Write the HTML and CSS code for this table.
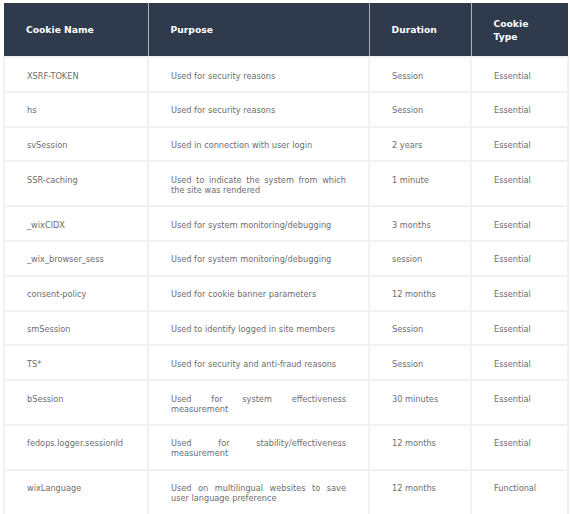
FILE: index.html
```html
<!DOCTYPE html>
<html>
<head>
<meta charset="utf-8">
<link rel="stylesheet" href="styles.css">
</head>
<body>
<div class="wrap">
<table class="cookies">
  <colgroup>
    <col class="c1"><col class="c2"><col class="c3"><col class="c4">
  </colgroup>
  <thead>
    <tr><th>Cookie Name</th><th>Purpose</th><th>Duration</th><th>Cookie<br>Type</th></tr>
  </thead>
  <tbody>
    <tr><td>XSRF-TOKEN</td><td class="p">Used for security reasons</td><td>Session</td><td>Essential</td></tr>
    <tr><td>hs</td><td class="p">Used for security reasons</td><td>Session</td><td>Essential</td></tr>
    <tr><td>svSession</td><td class="p">Used in connection with user login</td><td>2 years</td><td>Essential</td></tr>
    <tr><td>SSR-caching</td><td class="p">Used to indicate the system from which the site was rendered</td><td>1 minute</td><td>Essential</td></tr>
    <tr><td>_wixCIDX</td><td class="p">Used for system monitoring/debugging</td><td>3 months</td><td>Essential</td></tr>
    <tr><td>_wix_browser_sess</td><td class="p">Used for system monitoring/debugging</td><td>session</td><td>Essential</td></tr>
    <tr><td>consent-policy</td><td class="p">Used for cookie banner parameters</td><td>12 months</td><td>Essential</td></tr>
    <tr><td>smSession</td><td class="p">Used to identify logged in site members</td><td>Session</td><td>Essential</td></tr>
    <tr><td>TS*</td><td class="p">Used for security and anti-fraud reasons</td><td>Session</td><td>Essential</td></tr>
    <tr><td>bSession</td><td class="p">Used for system effectiveness measurement</td><td>30 minutes</td><td>Essential</td></tr>
    <tr><td>fedops.logger.sessionId</td><td class="p">Used for stability/effectiveness measurement</td><td>12 months</td><td>Essential</td></tr>
    <tr><td>wixLanguage</td><td class="p">Used on multilingual websites to save user language preference</td><td>12 months</td><td>Functional</td></tr>
  </tbody>
</table>
</div>
</body>
</html>
```

FILE: styles.css
```css
html, body {
  margin: 0;
  padding: 0;
  background: #ffffff;
}
.wrap {
  padding: 3px 3px 0 3px;
}
.cookies {
  width: 564px;
  border-collapse: collapse;
  table-layout: fixed;
  font-family: "DejaVu Sans", sans-serif;
}
.c1 { width: 144px; }
.c2 { width: 221px; }
.c3 { width: 102px; }
.c4 { width: 97px; }
.cookies th {
  background: #2f3a4d;
  color: #ffffff;
  font-weight: bold;
  font-size: 9.2px;
  line-height: 13px;
  text-align: left;
  height: 54px;
  box-sizing: border-box;
  padding: 0 22px;
  vertical-align: middle;
  border-left: 1px solid #aeb3bb;
  border-right: 1px solid #aeb3bb;
}
.cookies th:first-child { border-left: none; }
.cookies th:last-child { border-right: none; }
.cookies td {
  font-size: 8.2px;
  line-height: 10px;
  color: #6e6e6e;
  padding: 12.5px 22px 10.3px 22px;
  vertical-align: top;
  border: 2px solid #f1f1f1;
}
.cookies td.p {
  text-align: justify;
}
```
